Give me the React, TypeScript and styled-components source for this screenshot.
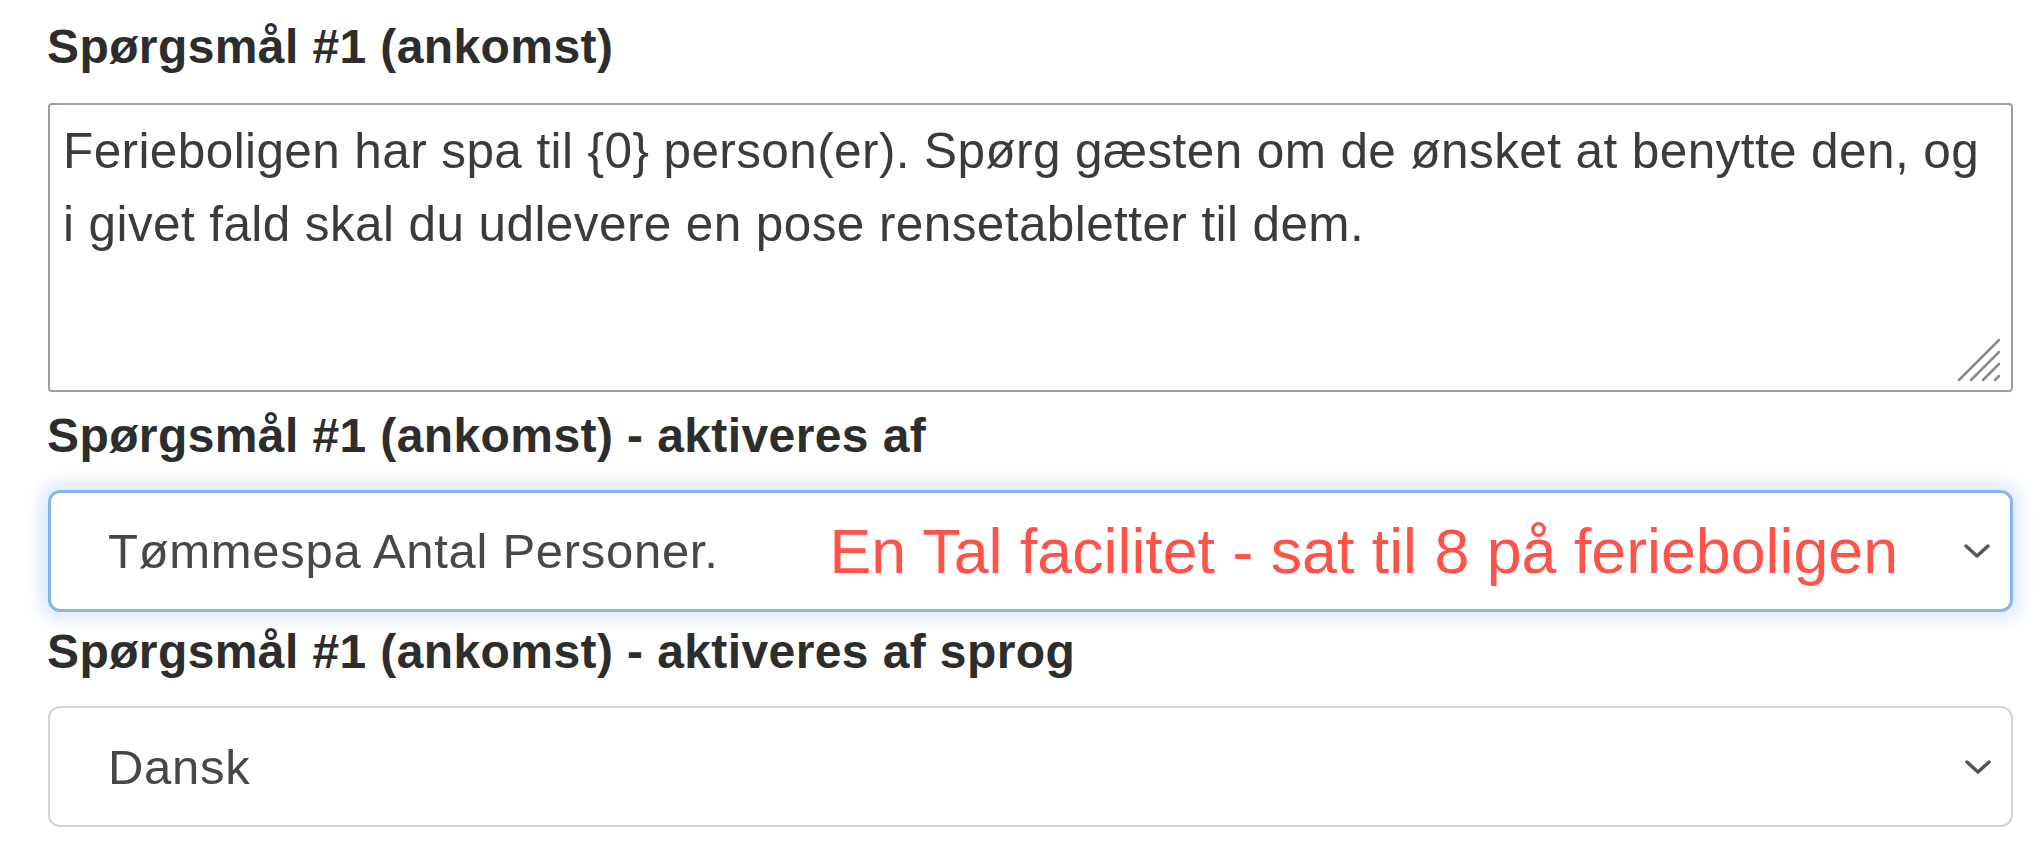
import React from 'react';
import styled, { createGlobalStyle } from 'styled-components';

const GlobalStyle = createGlobalStyle`
  html, body { margin: 0; padding: 0; background: #ffffff; }
  body { font-family: "Liberation Sans", Arial, sans-serif; }
`;

const Page = styled.div`
  width: 2042px;
  box-sizing: border-box;
  padding: 19px 29px 0 48px;
  display: flex;
  flex-direction: column;
`;

const Label = styled.label<{ $gapBelow: number }>`
  display: block;
  margin: 0 0 ${(p) => p.$gapBelow}px -1px;
  font-family: "Liberation Sans", Arial, sans-serif;
  font-size: 48px;
  line-height: 56px;
  letter-spacing: 0.4px;
  font-weight: 700;
  color: #2d2d2d;
  white-space: nowrap;
`;

const TextAreaWrap = styled.div`
  position: relative;
  height: 289px;
  margin-bottom: 16px;
`;

const TextArea = styled.textarea`
  display: block;
  width: 100%;
  height: 100%;
  box-sizing: border-box;
  margin: 0;
  padding: 9px 24px 9px 13px;
  border: 2px solid #9c9cae;
  border-radius: 4px;
  font-family: "Liberation Sans", Arial, sans-serif;
  font-size: 49.5px;
  line-height: 73px;
  letter-spacing: 0.4px;
  color: #3b3b3b;
  background: #ffffff;
  resize: none;
  outline: none;
  overflow: hidden;
`;

const Grip = styled.svg`
  position: absolute;
  right: 11px;
  bottom: 9px;
  width: 46px;
  height: 46px;
`;

const SelectBox = styled.div<{ $focused?: boolean; $gapBelow: number }>`
  display: flex;
  align-items: center;
  box-sizing: border-box;
  height: ${(p) => (p.$focused ? 122 : 121)}px;
  margin-bottom: ${(p) => p.$gapBelow}px;
  padding: 0 19px 0 ${(p) => (p.$focused ? 57 : 58)}px;
  border: ${(p) => (p.$focused ? '3px solid #85b6ec' : '2px solid #d3d3d3')};
  border-radius: 12px;
  background: #ffffff;
  box-shadow: ${(p) =>
    p.$focused ? '0 0 16px 8px rgba(105, 160, 230, 0.22)' : 'none'};
`;

const SelectValue = styled.span`
  font-family: "Liberation Sans", Arial, sans-serif;
  font-size: 49px;
  letter-spacing: 0.7px;
  color: #474747;
  white-space: nowrap;
`;

const Note = styled.span`
  margin-left: auto;
  margin-right: 65px;
  font-family: "Liberation Sans", Arial, sans-serif;
  font-size: 62.7px;
  color: #ff5249;
  white-space: nowrap;
`;

const Chevron = styled.svg`
  flex: none;
  margin-left: auto;
  width: 28px;
  height: 16px;
  ${Note} + & {
    margin-left: 0;
  }
`;

const ChevronIcon = () => (
  <Chevron viewBox="0 0 28 16">
    <polyline
      points="3,3 14,13 25,3"
      fill="none"
      stroke="#555555"
      strokeWidth="3.5"
      strokeLinecap="round"
      strokeLinejoin="round"
    />
  </Chevron>
);

export default function App() {
  return (
    <>
      <GlobalStyle />
      <Page>
        <Label $gapBelow={28}>Spørgsmål #1 (ankomst)</Label>
        <TextAreaWrap>
          <TextArea
            readOnly
            value="Ferieboligen har spa til {0} person(er). Spørg gæsten om de ønsket at benytte den, og i givet fald skal du udlevere en pose rensetabletter til dem."
          />
          <Grip viewBox="0 0 46 46">
            <g stroke="#8a8a8a" strokeWidth="2.5" strokeLinecap="round">
              <line x1="3" y1="43" x2="43" y2="3" />
              <line x1="15" y1="43" x2="43" y2="15" />
              <line x1="27" y1="43" x2="43" y2="27" />
              <line x1="39" y1="43" x2="43" y2="39" />
            </g>
          </Grip>
        </TextAreaWrap>

        <Label $gapBelow={26}>Spørgsmål #1 (ankomst) - aktiveres af</Label>
        <SelectBox $focused $gapBelow={12}>
          <SelectValue>Tømmespa Antal Personer.</SelectValue>
          <Note>En Tal facilitet - sat til 8 på ferieboligen</Note>
          <ChevronIcon />
        </SelectBox>

        <Label $gapBelow={26}>Spørgsmål #1 (ankomst) - aktiveres af sprog</Label>
        <SelectBox $gapBelow={0}>
          <SelectValue>Dansk</SelectValue>
          <ChevronIcon />
        </SelectBox>
      </Page>
    </>
  );
}
